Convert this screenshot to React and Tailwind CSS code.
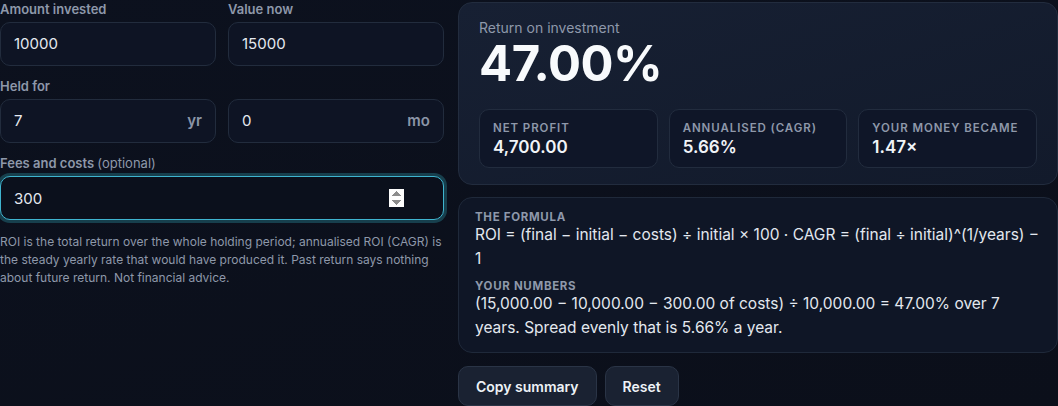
import React from "react";

const font = { fontFamily: "Inter, 'Noto Sans', sans-serif" };

function Field({ value, suffix, focused }) {
  if (focused) {
    return (
      <div className="relative">
        <input
          type="number"
          defaultValue={value}
          autoFocus
          className="h-[44px] w-full rounded-[10px] border border-[#3fb4cf] bg-[#0b101c] pl-[13px] pr-[39px] text-[15px] text-[#e5e9f0] outline-none ring-[3px] ring-[#1d5463]/70"
        />
      </div>
    );
  }
  return (
    <div className="flex h-[44px] items-center justify-between rounded-[10px] border border-[#222c3d] bg-[#0e1424] pl-[13px] pr-[13px]">
      <span className="text-[15px] text-[#e5e9f0]">{value}</span>
      {suffix && <span className="text-[15px] font-semibold text-[#8b95a7]">{suffix}</span>}
    </div>
  );
}

function Label({ children }) {
  return <div className="h-[18px] text-[13px] font-semibold leading-[18px] text-[#8e98aa]">{children}</div>;
}

function Stat({ label, value }) {
  return (
    <div className="flex-1 rounded-[10px] border border-[#222c3e] bg-[#0f1628] px-[13px] pt-[10px] pb-[9px]">
      <div className="text-[11.5px] font-semibold uppercase leading-[16px] tracking-[0.08em] text-[#8e98aa]">{label}</div>
      <div className="text-[17px] font-semibold leading-[22px] text-[#f1f4f8]">{value}</div>
    </div>
  );
}

export default function App() {
  return (
    <div style={font} className="h-[406px] w-[1058px] overflow-hidden bg-[#0c111d] bg-gradient-to-br from-[#0c111e] to-[#0b0f1a]">
      <div className="flex gap-[14px]">
        <div className="flex w-[444px] shrink-0 flex-col">
          <div className="grid grid-cols-2 gap-x-[12px]">
            <div className="flex flex-col gap-[4px]">
              <Label>Amount invested</Label>
              <Field value="10000" />
            </div>
            <div className="flex flex-col gap-[4px]">
              <Label>Value now</Label>
              <Field value="15000" />
            </div>
          </div>
          <div className="mt-[11px] flex flex-col gap-[4px]">
            <Label>Held for</Label>
            <div className="grid grid-cols-2 gap-x-[12px]">
              <Field value="7" suffix="yr" />
              <Field value="0" suffix="mo" />
            </div>
          </div>
          <div className="mt-[11px] flex flex-col gap-[4px]">
            <Label>
              Fees and costs <span className="font-normal">(optional)</span>
            </Label>
            <Field value="300" focused />
          </div>
          <p className="mt-[13px] text-[12px] leading-[18px] text-[#8e98aa]">
            ROI is the total return over the whole holding period; annualised ROI (CAGR) is the steady yearly rate that
            would have produced it. Past return says nothing about future return. Not financial advice.
          </p>
        </div>

        <div className="flex min-w-0 flex-1 flex-col">
          <div className="mt-[2px] rounded-[14px] border border-[#222c3e] bg-gradient-to-br from-[#172033] to-[#121a2b] px-[20px] pt-[16px] pb-[16px]">
            <div className="text-[14px] leading-[18px] text-[#8e98aa]">Return on investment</div>
            <div className="mt-[2px] text-[49px] font-bold leading-[50px] tracking-[-0.01em] text-[#f8fafc]">47.00%</div>
            <div className="mt-[20px] flex gap-[11px]">
              <Stat label="Net profit" value="4,700.00" />
              <Stat label="Annualised (CAGR)" value="5.66%" />
              <Stat label="Your money became" value="1.47×" />
            </div>
          </div>

          <div className="mt-[12px] rounded-[14px] border border-[#1f293a] bg-[#0f1626] px-[16px] pt-[13px] pb-[12px]">
            <div className="text-[11.5px] font-bold uppercase leading-[12px] tracking-[0.06em] text-[#8e98aa]">The formula</div>
            <div className="text-[15.5px] leading-[24px] text-[#e3e8ef]">
              ROI = (final − initial − costs) ÷ initial × 100 · CAGR = (final ÷ initial)^(1/years) − 1
            </div>
            <div className="mt-[9px] text-[11.5px] font-bold uppercase leading-[12px] tracking-[0.06em] text-[#8e98aa]">Your numbers</div>
            <div className="text-[15.5px] leading-[24px] text-[#e3e8ef]">
              (15,000.00 − 10,000.00 − 300.00 of costs) ÷ 10,000.00 = 47.00% over 7 years. Spread evenly that is 5.66% a
              year.
            </div>
          </div>

          <div className="mt-[13px] flex gap-[8px]">
            <button className="h-[40px] rounded-[10px] border border-[#2a3446] bg-[#1a2232] px-[17px] text-[14px] font-semibold text-[#eef2f7]">
              Copy summary
            </button>
            <button className="h-[40px] rounded-[10px] border border-[#2a3446] bg-[#1a2232] px-[17px] text-[14px] font-semibold text-[#eef2f7]">
              Reset
            </button>
          </div>
        </div>
      </div>
    </div>
  );
}
